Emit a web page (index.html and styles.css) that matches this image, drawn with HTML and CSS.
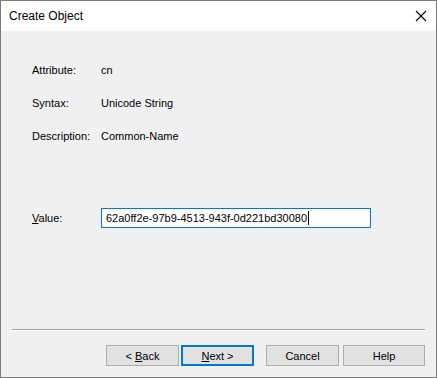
FILE: index.html
```html
<!DOCTYPE html>
<html lang="en">
<head>
    <meta charset="UTF-8">
    <title>Create Object</title>
    <link rel="stylesheet" href="styles.css">
</head>
<body>
    <div class="window">
        <!-- Title bar -->
        <div class="titlebar">
            <span class="title">Create Object</span>
            <svg class="close" width="12" height="12" viewBox="0 0 12 12">
                <path d="M1 1 L11 11 M11 1 L1 11" stroke="#000" stroke-width="1.1" fill="none"/>
            </svg>
        </div>

        <div class="content">
            <div class="info">
                <span class="label">Attribute:</span><span>cn</span>
                <span class="label">Syntax:</span><span>Unicode String</span>
                <span class="label">Description:</span><span>Common-Name</span>
            </div>

            <div class="value-row">
                <span class="label"><u>V</u>alue:</span>
                <div class="textbox">62a0ff2e-97b9-4513-943f-0d221bd30080<span class="caret"></span></div>
            </div>

            <div class="separator"></div>

            <div class="buttons">
                <button class="btn">&lt; <u>B</u>ack</button>
                <button class="btn default"><u>N</u>ext &gt;</button>
                <button class="btn cancel">Cancel</button>
                <button class="btn help">Help</button>
            </div>
        </div>
    </div>
</body>
</html>
```

FILE: styles.css
```css
* {
    box-sizing: border-box;
}

body {
    margin: 0;
    font-family: "Liberation Sans", Arial, sans-serif;
    font-size: 11px;
    color: #000;
}

.window {
    width: 437px;
    height: 378px;
    border: 1px solid #7a7a7a;
    display: flex;
    flex-direction: column;
    background-color: #f0f0f0;
}

.titlebar {
    height: 30px;
    background-color: #fff;
    display: flex;
    align-items: center;
    justify-content: space-between;
    padding: 0 9px 0 8px;
}

.title {
    font-size: 12px;
}

.close {
    margin-top: -1px;
}

.content {
    flex: 1;
    display: flex;
    flex-direction: column;
    padding: 33px 11px 0 11px;
}

.info {
    display: grid;
    grid-template-columns: 69px auto;
    grid-auto-rows: 13px;
    row-gap: 20px;
    line-height: 13px;
    padding-left: 20px;
}

.value-row {
    display: flex;
    align-items: center;
    margin-top: 65px;
    padding-left: 20px;
}

.value-row .label {
    width: 69px;
}

.textbox {
    width: 270px;
    height: 20px;
    border: 1px solid #0078d7;
    background-color: #fff;
    padding: 0 4px;
    line-height: 18px;
    display: flex;
    align-items: center;
}

.caret {
    display: inline-block;
    width: 1px;
    height: 14px;
    background-color: #000;
    margin-left: 1px;
}

.separator {
    margin-top: 101px;
    height: 2px;
    border-top: 1px solid #a0a0a0;
    border-bottom: 1px solid #fff;
}

.buttons {
    display: flex;
    justify-content: flex-end;
    margin-top: 14px;
}

.btn {
    width: 73px;
    height: 21px;
    padding: 0;
    font-family: inherit;
    font-size: 11px;
    color: #000;
    background-color: #e1e1e1;
    border: 1px solid #adadad;
}

.btn u {
    text-decoration-thickness: 1px;
}

.default {
    margin-left: 2px;
    border: 2px solid #0078d7;
}

.cancel {
    margin-left: 12px;
}

.help {
    width: 82px;
    margin-left: 4px;
}
```
